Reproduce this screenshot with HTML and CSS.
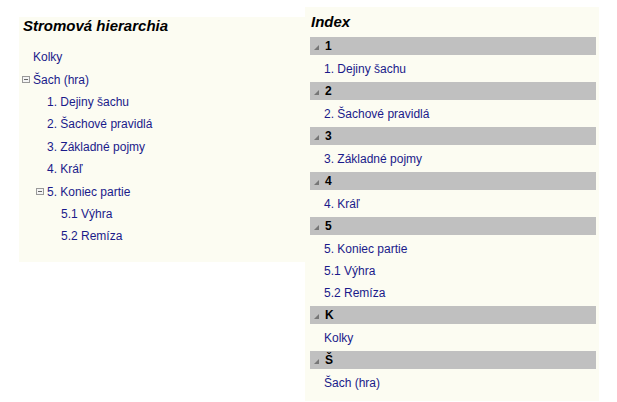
FILE: index.html
```html
<!DOCTYPE html>
<html lang="sk">
<head>
    <meta charset="UTF-8">
    <title>Stromová hierarchia a index</title>
    <link rel="stylesheet" href="styles.css">
</head>
<body>
    <div class="page">
        <div class="panel tree-panel">
            <div class="panel-title">Stromová hierarchia</div>
            <ul class="tree">
                <li><div class="node"><span class="toggle"></span><a href="#">Kolky</a></div></li>
                <li>
                    <div class="node">
                        <span class="toggle"><svg width="8" height="7" viewBox="0 0 8 7"><rect x="0.5" y="0.5" width="7" height="6" fill="#f4f4f4" stroke="#999"/><line x1="2" y1="3.5" x2="6" y2="3.5" stroke="#666"/></svg></span><a href="#">Šach (hra)</a>
                    </div>
                    <ul>
                        <li><div class="node"><span class="toggle"></span><a href="#">1. Dejiny šachu</a></div></li>
                        <li><div class="node"><span class="toggle"></span><a href="#">2. Šachové pravidlá</a></div></li>
                        <li><div class="node"><span class="toggle"></span><a href="#">3. Základné pojmy</a></div></li>
                        <li><div class="node"><span class="toggle"></span><a href="#">4. Kráľ</a></div></li>
                        <li>
                            <div class="node">
                                <span class="toggle"><svg width="8" height="7" viewBox="0 0 8 7"><rect x="0.5" y="0.5" width="7" height="6" fill="#f4f4f4" stroke="#999"/><line x1="2" y1="3.5" x2="6" y2="3.5" stroke="#666"/></svg></span><a href="#">5. Koniec partie</a>
                            </div>
                            <ul>
                                <li><div class="node"><span class="toggle"></span><a href="#">5.1 Výhra</a></div></li>
                                <li><div class="node"><span class="toggle"></span><a href="#">5.2 Remíza</a></div></li>
                            </ul>
                        </li>
                    </ul>
                </li>
            </ul>
        </div>

        <div class="panel index-panel">
            <div class="panel-title">Index</div>

            <div class="group-head"><span class="arrow"><svg width="5" height="5" viewBox="0 0 5 5"><polygon points="5,0 5,5 0,5" fill="#777"/></svg></span>1</div>
            <ul class="group-items">
                <li><a href="#">1. Dejiny šachu</a></li>
            </ul>

            <div class="group-head"><span class="arrow"><svg width="5" height="5" viewBox="0 0 5 5"><polygon points="5,0 5,5 0,5" fill="#777"/></svg></span>2</div>
            <ul class="group-items">
                <li><a href="#">2. Šachové pravidlá</a></li>
            </ul>

            <div class="group-head"><span class="arrow"><svg width="5" height="5" viewBox="0 0 5 5"><polygon points="5,0 5,5 0,5" fill="#777"/></svg></span>3</div>
            <ul class="group-items">
                <li><a href="#">3. Základné pojmy</a></li>
            </ul>

            <div class="group-head"><span class="arrow"><svg width="5" height="5" viewBox="0 0 5 5"><polygon points="5,0 5,5 0,5" fill="#777"/></svg></span>4</div>
            <ul class="group-items">
                <li><a href="#">4. Kráľ</a></li>
            </ul>

            <div class="group-head"><span class="arrow"><svg width="5" height="5" viewBox="0 0 5 5"><polygon points="5,0 5,5 0,5" fill="#777"/></svg></span>5</div>
            <ul class="group-items">
                <li><a href="#">5. Koniec partie</a></li>
                <li><a href="#">5.1 Výhra</a></li>
                <li><a href="#">5.2 Remíza</a></li>
            </ul>

            <div class="group-head"><span class="arrow"><svg width="5" height="5" viewBox="0 0 5 5"><polygon points="5,0 5,5 0,5" fill="#777"/></svg></span>K</div>
            <ul class="group-items">
                <li><a href="#">Kolky</a></li>
            </ul>

            <div class="group-head"><span class="arrow"><svg width="5" height="5" viewBox="0 0 5 5"><polygon points="5,0 5,5 0,5" fill="#777"/></svg></span>Š</div>
            <ul class="group-items">
                <li><a href="#">Šach (hra)</a></li>
            </ul>
        </div>
    </div>
</body>
</html>
```

FILE: styles.css
```css
body {
    margin: 0;
    padding: 0;
    background: #fff;
    font-family: 'Liberation Sans', Arial, sans-serif;
    font-size: 12px;
}
.page {
    display: flex;
    align-items: flex-start;
    padding-left: 19px;
}
.panel {
    background: #fcfcf2;
    box-sizing: border-box;
}
.panel-title {
    font-size: 15px;
    font-weight: bold;
    font-style: italic;
    line-height: 18px;
    color: #000;
}
a {
    color: #1a1a8a;
    text-decoration: none;
}
ul {
    list-style: none;
    margin: 0;
    padding: 0;
}

/* tree */
.tree-panel {
    width: 286px;
    height: 245px;
    margin-top: 17px;
}
.tree-panel .panel-title {
    padding-left: 4px;
    margin-bottom: 11px;
}
.tree ul {
    padding-left: 14px;
}
.node {
    display: flex;
    align-items: center;
    height: 22.4px;
}
.toggle {
    width: 14px;
    flex: none;
    display: flex;
    align-items: center;
    padding-left: 3px;
    box-sizing: border-box;
}
.toggle svg {
    display: block;
}

/* index */
.index-panel {
    width: 294px;
    height: 394px;
    margin-top: 7px;
    padding: 6px 3px 5px 5px;
}
.index-panel .panel-title {
    padding-left: 1px;
    margin-bottom: 6px;
}
.group-head {
    display: flex;
    align-items: center;
    height: 18px;
    background: #c0c0c0;
    font-weight: bold;
    color: #000;
}
.arrow {
    width: 15px;
    flex: none;
    display: flex;
    align-items: center;
    padding-left: 4px;
    padding-top: 2px;
    box-sizing: border-box;
}
.arrow svg {
    display: block;
}
.group-items {
    padding: 2.5px 0 2.5px 14px;
}
.group-items li {
    line-height: 22px;
}
```
